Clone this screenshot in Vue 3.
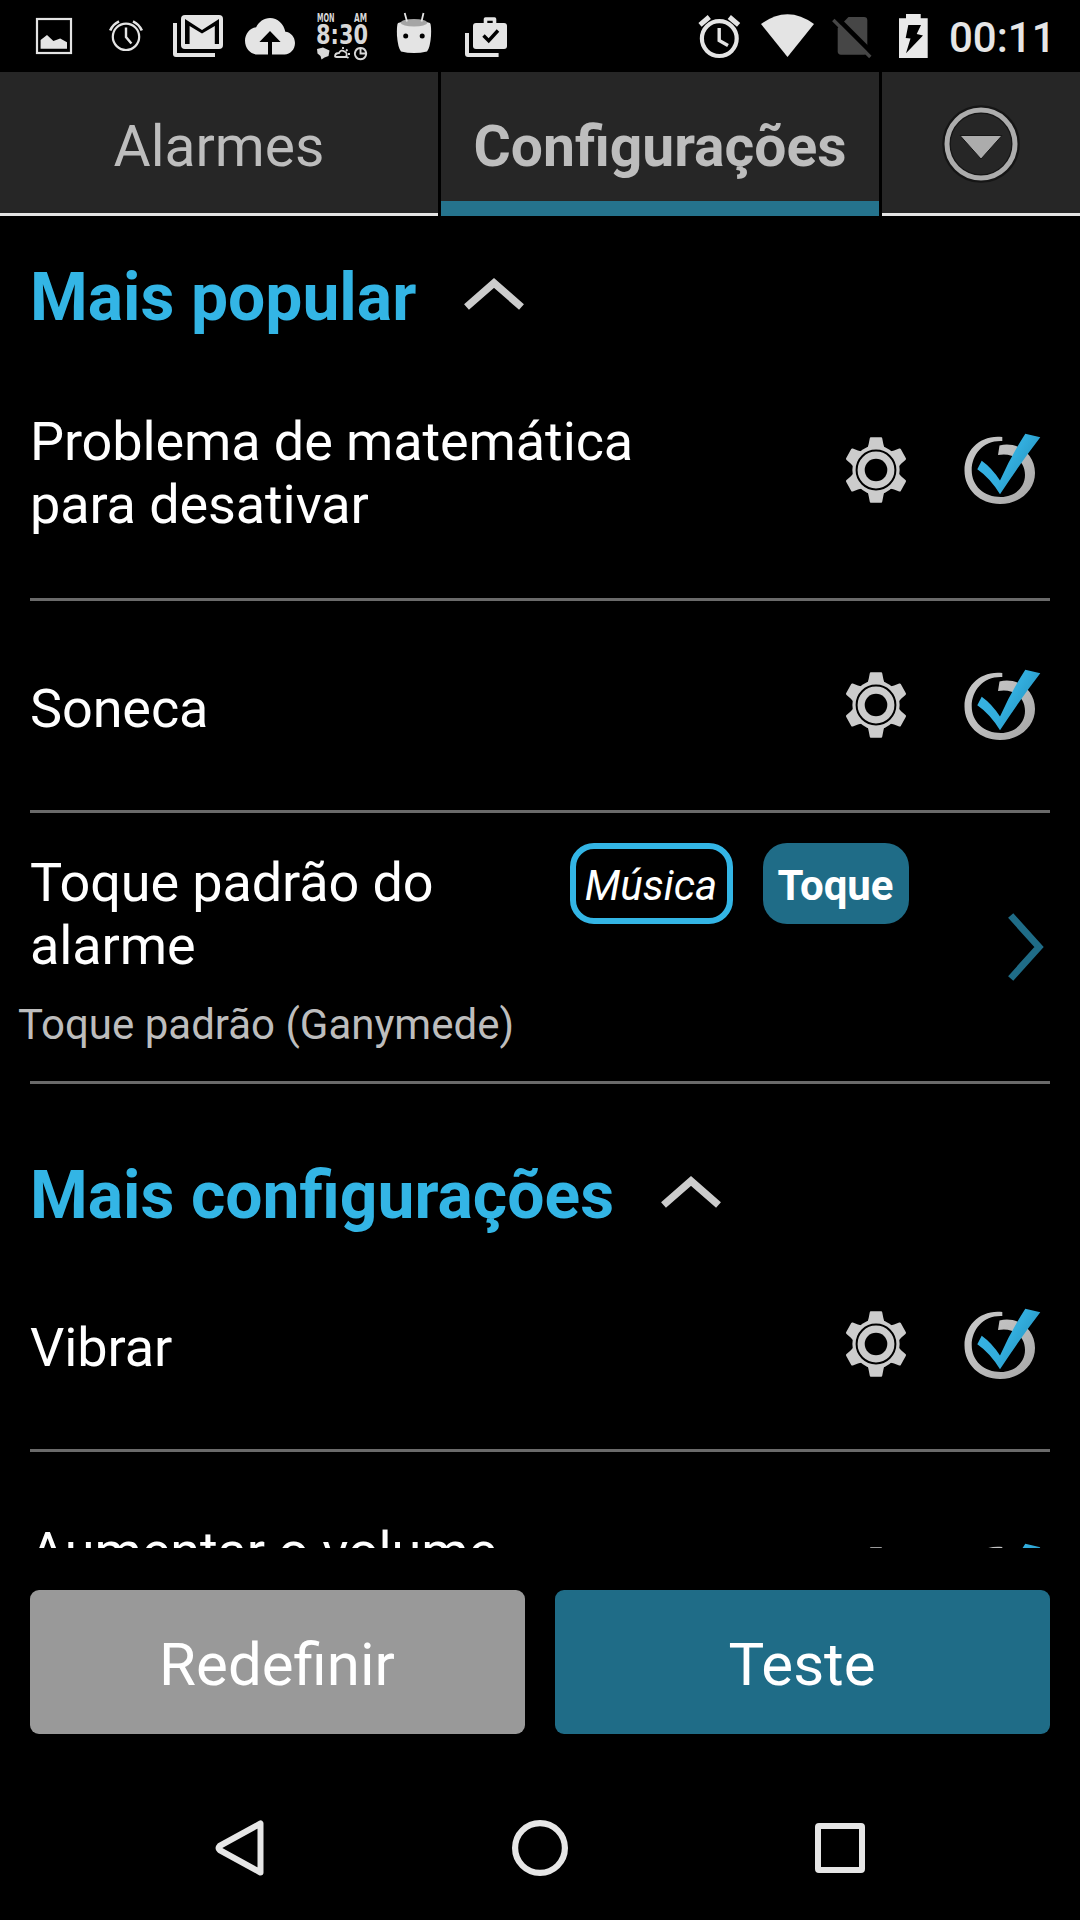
<script setup>
const groups = [
  {
    title: 'Mais popular',
    first: true,
    rows: [
      { label: 'Problema de matemática para desativar', tall: true },
      { label: 'Soneca' },
      { label: 'Toque padrão do alarme', ringtone: 'Toque padrão (Ganymede)' },
    ],
  },
  {
    title: 'Mais configurações',
    rows: [{ label: 'Vibrar' }, { label: 'Aumentar o volume', tall: true }],
  },
]
const teeth = [0, 60, 120, 180, 240, 300]
</script>

<template>
  <div class="screen">
    <header class="status">
      <svg class="slot" viewBox="0 0 72 72">
        <rect x="19" y="19" width="34" height="34" fill="none" stroke="#e4e4e4" stroke-width="2.2" />
        <path d="M22.6 48.7V40L29 35l6.4 6 6.8-2.5 6.8 3.8v6.4z" fill="#e4e4e4" />
      </svg>
      <svg class="slot" viewBox="0 0 72 72" fill="none" stroke="#e4e4e4">
        <circle cx="36" cy="36.8" r="13.2" stroke-width="2.2" />
        <path d="M36 27.5V37l5.4 6.4" stroke-width="2.4" />
        <path d="M20.2 30.5Q22.5 24.5 29 21.3M51.8 30.5Q49.5 24.5 43 21.3" stroke-width="2.6" />
      </svg>
      <svg class="slot" viewBox="0 0 72 72" fill="#e4e4e4">
        <rect x="19" y="15" width="42" height="34" rx="4" />
        <path d="M11 23h4v30h38v4H14q-3 0-3-3z" />
        <path d="M23 44V19l17 11 17-11v25h-4.2V26L40 33.6 27.6 26v18z" fill="#000" />
      </svg>
      <svg class="slot" viewBox="0 0 72 72" fill="#e4e4e4">
        <path transform="translate(11 8.75) scale(2.083 2.29)" d="M19.35 10.04C18.67 6.59 15.64 4 12 4 9.11 4 6.6 5.64 5.35 8.04 2.34 8.36 0 10.91 0 14c0 3.31 2.69 6 6 6h13c2.76 0 5-2.24 5-5 0-2.64-2.05-4.78-4.65-4.96z" />
        <path d="M36 31l10.6 11H38v13h-4V42h-8.6z" fill="#000" />
      </svg>
      <svg class="slot lcd" viewBox="0 0 72 72" fill="#d8d8d8">
        <text x="11" y="21.8" font-size="12" textLength="17.5" lengthAdjust="spacingAndGlyphs">MON</text>
        <text x="48" y="21.8" font-size="12" textLength="13" lengthAdjust="spacingAndGlyphs">AM</text>
        <text x="10" y="44" font-size="26" textLength="52" lengthAdjust="spacingAndGlyphs">8:30</text>
        <path d="M11 49l6-1.5 6.5 3-1 5.5-4 1.5-3 2-1-3.5-3-2.5z" />
        <path d="M29 56.5q0-3.5 4-3.5 2-3.8 5.5-1.5 3.5 1.5 1.5 5.5h-9.5q-1.5 0-1.5-.5zM37 47v2M41.5 49.5l-1.500 1.500M44 54h-2M42.500 58l-1.500-1" fill="none" stroke="#d8d8d8" stroke-width="1.800" />
        <path d="M54.500 48a5.600 5.600 0 1 0 .1 0zM54.500 49v4.500h5" fill="none" stroke="#d8d8d8" stroke-width="1.900" />
      </svg>
      <svg class="slot" viewBox="0 0 72 72" fill="#e4e4e4">
        <path d="M20 23q16-6 32 0 1.500 2 1 13-1 12-4 15.500-13 3-26 0-3-3.500-4-15.500-.5-11 1-13z" />
        <ellipse cx="36" cy="22.800" rx="13.200" ry="3.800" fill="#a5a5a5" />
        <path d="M26.700 13l2.300 8.500M45.500 13l-2 8.500" stroke="#e4e4e4" stroke-width="1.800" />
        <circle cx="27.700" cy="36" r="2.500" fill="#000" />
        <circle cx="44.200" cy="36" r="2.500" fill="#000" />
      </svg>
      <svg class="slot" viewBox="0 0 72 72" fill="#e4e4e4">
        <rect x="23" y="23" width="34" height="26" rx="3" />
        <path d="M35.500 24v-5h9v5" fill="none" stroke="#e4e4e4" stroke-width="3.600" stroke-linejoin="round" />
        <path d="M15 33h4v20h29.600v4H18q-3 0-3-3z" />
        <path d="M33.500 35.500l5.200 5.200L48 30.500" fill="none" stroke="#000" stroke-width="3.400" />
      </svg>
      <span class="spacer"></span>
      <svg class="slot" viewBox="0 0 72 72" fill="none" stroke="#e4e4e4">
        <circle cx="35.300" cy="38.600" r="17.400" stroke-width="4.200" />
        <path d="M16 24.800l9.300-7.800M54.600 24.800L45.300 17" stroke-width="5" />
        <path d="M35.200 28v12.500l8.800 5" stroke-width="3.400" />
      </svg>
      <svg class="s64" viewBox="0 0 64 72"><path d="M5 24Q31.500 4.500 58 24L31.500 57z" fill="#e4e4e4" /></svg>
      <svg class="s64" viewBox="0 0 64 72">
        <path d="M28.500 17H44q3.300 0 3.300 3.300v31q0 3.400-3.300 3.400H21q-3.300 0-3.300-3.400V28z" fill="#464646" />
        <path d="M15 16l38 38" stroke="#000" stroke-width="5" />
        <path d="M13.300 20l37 37" stroke="#464646" stroke-width="3.400" />
      </svg>
      <svg class="s60" viewBox="0 0 60 72">
        <path d="M22 14h14.700v4.300h7V58H15V18.300h7z" fill="#e9e9e9" />
        <path d="M24.300 25H37l-4.300 9 6.300 1.500L22 53.300l4.500-14.800-4.800-.5z" fill="#000" />
      </svg>
      <span class="time">00:11</span>
    </header>

    <nav class="tabs">
      <div class="tab"><span>Alarmes</span></div>
      <div class="tab active"><span>Configurações</span></div>
      <div class="tab more">
        <svg width="80" height="80" viewBox="-40 -40 80 80">
          <circle r="34.500" fill="none" stroke="#151515" stroke-width="8.500" />
          <circle r="34" fill="none" stroke="#acacac" stroke-width="5" />
          <path d="M-21-8.500h42L0 15z" fill="#acacac" stroke="#171717" stroke-width="1" />
        </svg>
      </div>
    </nav>

    <main class="content">
      <section v-for="g in groups" :key="g.title">
        <h2 class="heading" :class="{ first: g.first }">
          <span>{{ g.title }}</span>
          <svg width="60" height="32" viewBox="0 0 60 32">
            <path d="M2.500 29L30 5l27.500 24" fill="none" stroke="#ccc" stroke-width="7.400" />
          </svg>
        </h2>
        <div v-for="r in g.rows" :key="r.label" class="row" :class="{ tall: r.tall, ring: r.ringtone }">
          <template v-if="r.ringtone">
            <div class="ring-main">
              <div class="ring-top">
                <div class="label">{{ r.label }}</div>
                <span class="pill outline">Música</span>
                <span class="pill solid">Toque</span>
              </div>
              <div class="sub">{{ r.ringtone }}</div>
            </div>
            <svg class="next" width="36" height="68" viewBox="0 0 36 68">
              <path d="M2.700 2.500L31 34 2.700 65.500" fill="none" stroke="#1f6c87" stroke-width="7" />
            </svg>
          </template>
          <template v-else>
            <div class="label">{{ r.label }}</div>
            <svg class="gear" width="66" height="66" viewBox="-33 -33 66 66">
              <g transform="scale(.965 1)" fill="#ccc">
                <circle r="24.500" />
                <path v-for="a in teeth" :key="a" :transform="`rotate(${a})`" d="M-10.500-20.500Q-8.200-22-7.600-26L-6.500-31.500Q-6.300-32.700-5.300-32.700H5.300Q6.300-32.700 6.500-31.500L7.600-26Q8.200-22 10.500-20.500z" />
              </g>
              <circle r="19.400" fill="none" stroke="#000" stroke-width="2" />
              <circle r="11.300" fill="#000" />
            </svg>
            <svg class="check" width="84" height="80" viewBox="0 0 84 80">
              <defs>
                <linearGradient id="metal" x1="0" y1="0" x2="1" y2="1">
                  <stop offset="0" stop-color="#c9c9c9" />
                  <stop offset=".5" stop-color="#bcbcbc" />
                  <stop offset="1" stop-color="#a4a4a4" />
                </linearGradient>
                <linearGradient id="tick" x1="0" y1="0" x2="1" y2=".6">
                  <stop offset="0" stop-color="#39b5e6" />
                  <stop offset=".6" stop-color="#32addd" />
                  <stop offset="1" stop-color="#2490bb" />
                </linearGradient>
              </defs>
              <path d="M42.300 7C20 4.500 4.500 20.500 4.500 40.500 4.500 59.500 20 74 40 74 60 74 75 60 75 43 75 24 58 11 39.500 15.500L38 25C52 22 65 30 65 45 65 58 54 67 41 67 24 67 11.700 56 11.700 40 11.700 24 24 10 42.300 11z" fill="url(#metal)" />
              <path d="M65.300 3.700L80.300 7.300Q59 35 40 64.300 30 48 17.300 39.300L21.700 30.700Q32 38 40 50.500 51 26 65.300 3.700z" fill="url(#tick)" />
            </svg>
          </template>
        </div>
      </section>
    </main>

    <footer class="actions">
      <button class="btn grey">Redefinir</button>
      <button class="btn blue">Teste</button>
    </footer>

    <nav class="navbar">
      <svg width="60" height="60" viewBox="-33 -30 60 60"><path d="M17.500-24.500V24.500L-23.500 2Q-25.500 0-23.500-2z" fill="none" stroke="#e6e6e6" stroke-width="6" stroke-linejoin="round" /></svg>
      <svg width="60" height="60" viewBox="-30 -30 60 60"><circle r="24.900" fill="none" stroke="#e6e6e6" stroke-width="6.200" /></svg>
      <svg width="60" height="60" viewBox="-30 -30 60 60"><rect x="-22" y="-22" width="44" height="44" rx="1" fill="none" stroke="#e6e6e6" stroke-width="6" stroke-linejoin="round" /></svg>
    </nav>
  </div>
</template>

<style>
body { background: #000; }
</style>

<style scoped>
.screen {
  width: 1080px;
  height: 1920px;
  display: flex;
  flex-direction: column;
  background: #000;
  color: #fff;
  font-family: Roboto, "Noto Sans", sans-serif;
  overflow: hidden;
}
svg { display: block; flex: none; }
.status { display: flex; height: 72px; padding-left: 18px; flex: none; }
.slot { width: 72px; height: 72px; }
.s64 { width: 64px; height: 72px; }
.s60 { width: 60px; height: 72px; }
.lcd { font-family: "DejaVu Sans", sans-serif; font-weight: 700; }
.spacer { width: 162px; }
.time { margin-left: 5px; font-size: 42px; font-weight: 500; line-height: 75px; color: #e6e6e6; }

.tabs { display: flex; gap: 3px; height: 144px; flex: none; }
.tab {
  box-sizing: border-box;
  width: 438px;
  height: 144px;
  display: flex;
  justify-content: center;
  background: #262626;
  border-bottom: 3px solid #e4e4e4;
  color: #bdbdbd;
  font-size: 57px;
  line-height: 150px;
}
.tab.active { font-weight: 700; border-bottom: 15px solid #25738d; }
.tab.more { width: 198px; padding-top: 32px; }

.content { height: 1332px; overflow: hidden; flex: none; }
.heading {
  box-sizing: border-box;
  height: 156px;
  margin: 0;
  padding: 0 30px 6px;
  display: flex;
  align-items: flex-end;
  gap: 47px;
  color: #33b5e5;
  font-size: 66px;
  font-weight: 700;
  line-height: 77px;
}
.heading.first { height: 126px; gap: 48px; }
.heading svg { margin-bottom: 26px; }

.row {
  height: 209px;
  margin: 0 30px;
  display: flex;
  align-items: center;
  border-bottom: 3px solid #6a6a6a;
}
.row.tall { height: 256px; }
.row.ring { height: 268px; }
.label {
  width: 640px;
  margin-right: auto;
  padding-top: 6px;
  font-size: 54px;
  line-height: 63px;
  letter-spacing: -0.11px;
}
.tall .label { height: 126px; }
.gear { margin: 0 51px 1px 0; }
.check { margin-right: 6px; }

.ring-main { align-self: flex-start; margin-left: -12px; padding-top: 30px; }
.ring-top { display: flex; align-items: flex-start; padding-left: 12px; }
.ring-top .label { width: 540px; height: 126px; margin: 8px 0 0; padding: 0; }
.pill {
  box-sizing: border-box;
  height: 81px;
  border-radius: 24px;
  font-size: 42px;
  text-align: center;
}
.outline { width: 163px; padding-right: 1px; border: 6px solid #33b5e5; font-style: italic; line-height: 73px; }
.solid { width: 146px; margin-left: 30px; padding-right: 1px; background: #1f6c87; font-weight: 700; line-height: 85px; }
.sub { margin-top: 23px; font-size: 42px; line-height: 49px; color: #bdbdbd; }
.next { margin: 0 6px 1px auto; }

.actions { display: flex; gap: 30px; height: 186px; padding: 42px 30px 0; flex: none; }
.btn {
  flex: 1;
  height: 144px;
  padding: 5px 1px 0 0;
  border: 0;
  border-radius: 9px;
  color: #fff;
  font: 400 60px/70px Roboto, "Noto Sans", sans-serif;
}
.grey { background: #999; }
.blue { background: #1f6c87; }

.navbar { display: flex; justify-content: center; align-items: center; gap: 240px; height: 144px; }
</style>
